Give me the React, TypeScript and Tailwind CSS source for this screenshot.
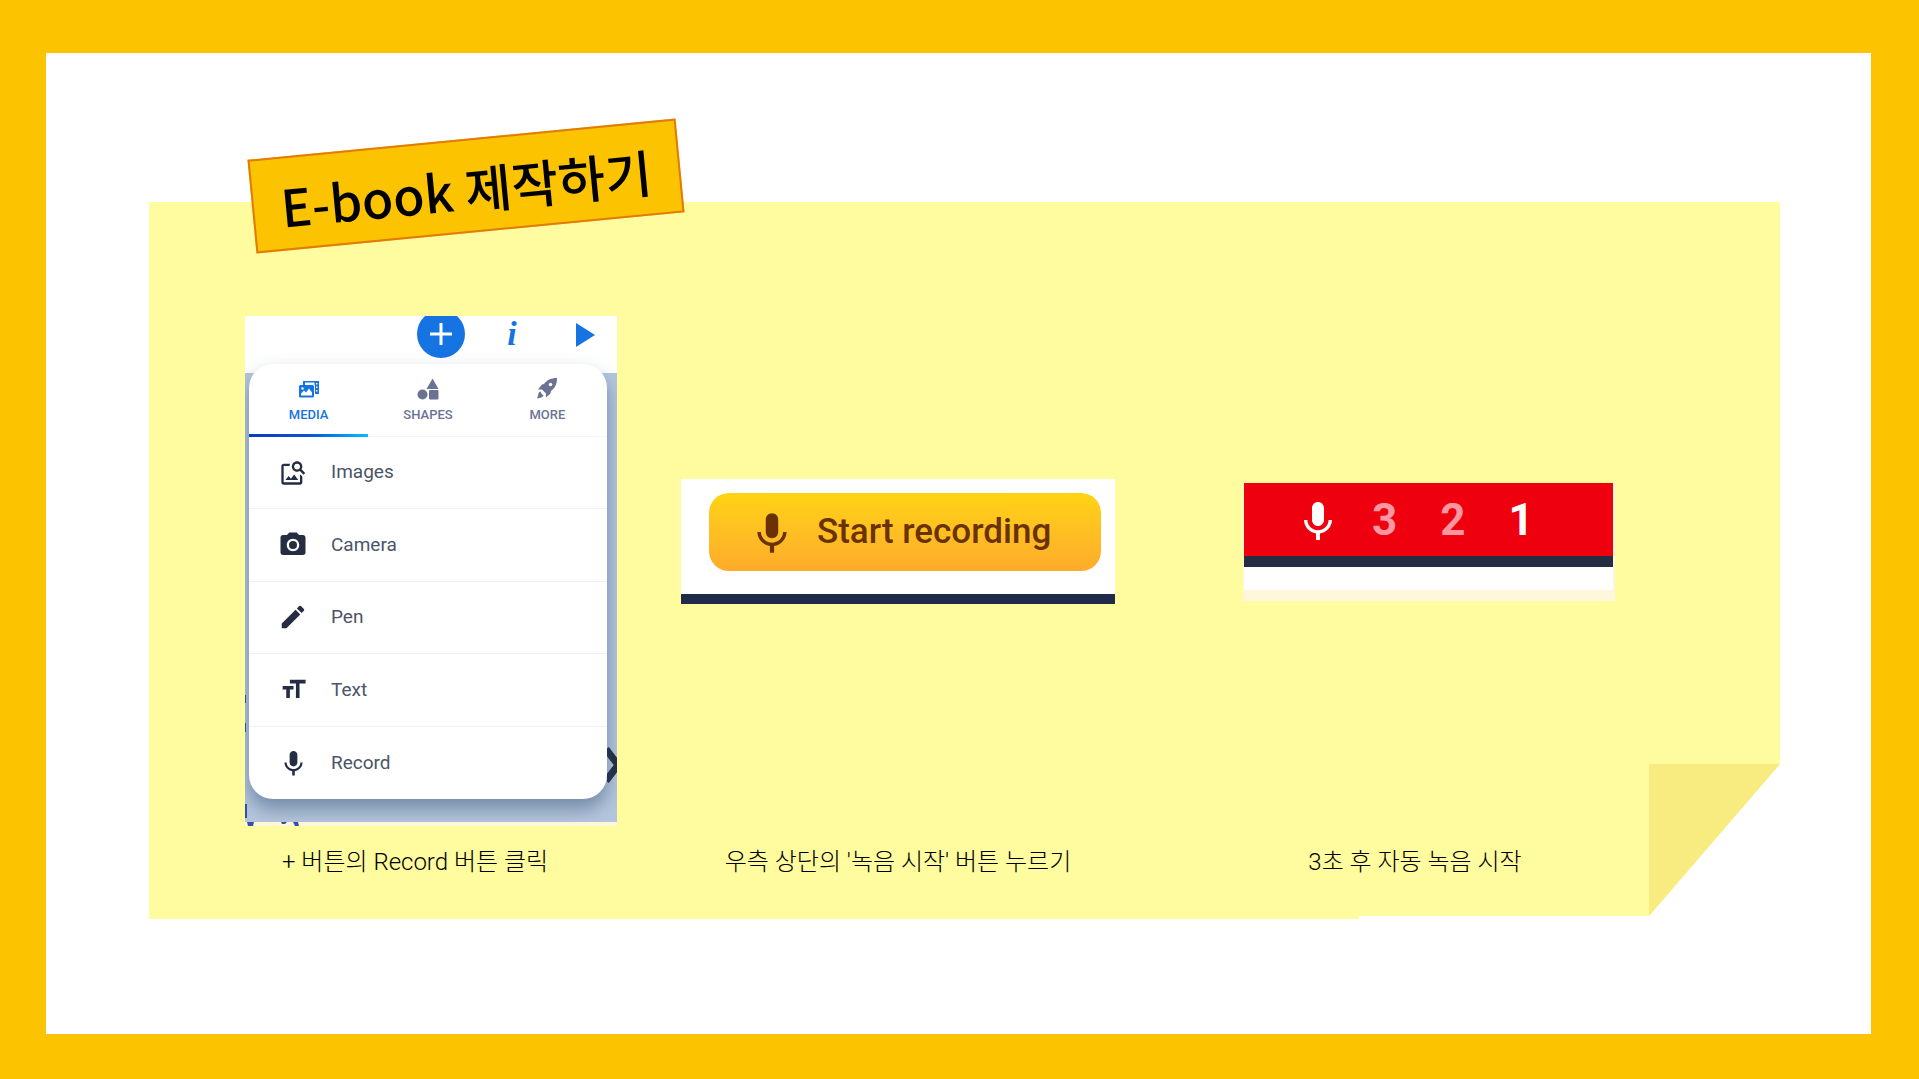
import type { ReactNode } from "react";
import type { IconType } from "react-icons";
import {
  MdCameraAlt,
  MdEdit,
  MdFormatSize,
  MdImageSearch,
  MdKeyboardVoice,
} from "react-icons/md";

const MediaIcon = () => (
  <svg viewBox="0 0 22 18" className="h-[18px] w-[22px]" fill="none">
    <path d="M5 1h16v13h-4V5H5z" fill="currentColor" />
    <path
      d="M7 2.500h9.500V5H7zM18 3h1.500v1.500H18zM18 6.500h1.500v1.500H18zM18 10h1.500v1.500H18z"
      fill="white"
    />
    <rect x="1" y="5" width="15" height="12.500" rx="1.500" fill="currentColor" />
    <path d="M3 15.500v-2l3-3 2 2 3-4 3 4v3z" fill="white" />
    <circle cx="4.500" cy="8.500" r="1.200" fill="white" />
  </svg>
);

const ShapesIcon = () => (
  <svg viewBox="0 0 22 22" className="h-[22px] w-[22px]" fill="currentColor">
    <path d="M15.500 0.500 21.500 11h-12z" />
    <circle cx="5.500" cy="16.500" r="5" />
    <rect x="12" y="12" width="9.500" height="9.500" rx="1" />
  </svg>
);

const RocketIcon = () => (
  <svg viewBox="0 0 20 21" className="h-[21px] w-5" fill="currentColor">
    <path d="M20 0C14 0 10 2 7 6L5 6.500 1 11.500 5 11.500 9 15.500 9 19.500 13.500 15.500 14 13C18 10 20 6 20 0z" />
    <path d="M3.500 13.500C1 14 1.500 17 0 20.500 3.500 20 6 19.500 6.500 17L5 16.500z" />
    <circle cx="13.500" cy="6.500" r="1.800" fill="white" />
  </svg>
);

const tabs: { label: string; icon: ReactNode; active?: boolean }[] = [
  { label: "MEDIA", icon: <MediaIcon />, active: true },
  { label: "SHAPES", icon: <ShapesIcon /> },
  { label: "MORE", icon: <RocketIcon /> },
];

const items: { label: string; Icon: IconType; size: number }[] = [
  { label: "Images", Icon: MdImageSearch, size: 28 },
  { label: "Camera", Icon: MdCameraAlt, size: 30 },
  { label: "Pen", Icon: MdEdit, size: 30 },
  { label: "Text", Icon: MdFormatSize, size: 29 },
  { label: "Record", Icon: MdKeyboardVoice, size: 31 },
];

const Toolbar = () => (
  <div className="flex h-[57px] items-start justify-end bg-white pr-[22px] text-[#1673e2]">
    <button
      aria-label="Add"
      className="-mt-[6px] flex h-12 w-12 items-center justify-center rounded-full bg-[#1673e2] text-white"
    >
      <svg viewBox="0 0 24 24" className="h-6 w-6" stroke="currentColor" strokeWidth="3">
        <path d="M12 1v22M1 12h22" />
      </svg>
    </button>
    <button
      aria-label="Info"
      className="ml-[37px] w-5 font-['Liberation_Serif',serif] text-[34px] leading-9 font-bold italic"
    >
      i
    </button>
    <button aria-label="Play" className="mt-[7px] ml-[54px]">
      <svg viewBox="0 0 19 24" className="h-6 w-[19px]" fill="currentColor">
        <path d="M0 0 19 12 0 24z" />
      </svg>
    </button>
  </div>
);

const AddMenu = () => (
  <div className="relative z-10 mr-[10px] -mt-[9px] ml-1 overflow-hidden rounded-3xl bg-white shadow-[0_10px_18px_rgba(50,80,115,0.5)]">
    <div className="grid h-[73px] grid-cols-3 border-b border-[#f4f5f7]">
      {tabs.map(({ label, icon, active }) => (
        <button
          key={label}
          className={
            active
              ? "relative flex flex-col items-center text-[#1673e2]"
              : "relative flex flex-col items-center text-[#6b7394]"
          }
        >
          <span className="mt-[13px] flex h-[23px] items-center">{icon}</span>
          <span className="mt-1 text-[13px] leading-[22px] font-medium">{label}</span>
          {active && (
            <span className="absolute inset-x-0 -bottom-px h-[3px] bg-linear-to-r from-[#0a3cc0] via-[#0f50d6] to-[#00bfff]" />
          )}
        </button>
      ))}
    </div>
    <ul className="grid h-[362px] grid-rows-5 divide-y divide-[#f0f1f3]">
      {items.map(({ label, Icon, size }) => (
        <li key={label}>
          <button className="flex h-full w-full items-center pl-[28px] text-[19px] text-[#4b5468]">
            <span className="flex w-[54px] text-[#242d42]">
              <span className="flex w-8 justify-center">
                <Icon size={size} />
              </span>
            </span>
            {label}
          </button>
        </li>
      ))}
    </ul>
  </div>
);

const MenuShot = () => (
  <div className="relative overflow-hidden bg-[#fdf7dc] pb-1">
    <div className="relative overflow-hidden bg-[#b5c6dc] pb-[23px]">
      <Toolbar />
      <AddMenu />
      <svg
        viewBox="0 0 10 38"
        className="absolute right-0 bottom-[38px] h-[38px] w-[10px]"
        fill="none"
        stroke="#242d42"
        strokeWidth="7"
      >
        <path d="M-1 3 11 19-1 35" />
      </svg>
    </div>
    <svg
      viewBox="0 0 60 132"
      className="absolute bottom-0 left-0 h-[132px] w-[60px]"
      fill="#3550a5"
    >
      <path d="M0 1h1v8H0zM0 29h1v9H0zM0 110h2v14H0zM2 128h7l-1 4H3zM36 128h6l-2 2h-3zM48 128h5l1 4h-4z" />
    </svg>
  </div>
);

const RecordShot = () => (
  <div className="mt-[163px] bg-white">
    <div className="pt-[14px] pr-[14px] pb-[23px] pl-7">
      <button className="flex h-[78px] w-full items-center gap-5 rounded-[20px] bg-linear-to-b from-[#ffd314] to-[#ffab2b] pl-[38px] text-[35px] font-medium whitespace-nowrap text-[#6a3200]">
        <MdKeyboardVoice size={50} />
        Start recording
      </button>
    </div>
    <div className="h-[10px] bg-[#1f2c49]" />
  </div>
);

const CountdownShot = () => (
  <div className="mt-[167px] bg-[#fef7dc] pr-[2px] pb-[11px] pl-px">
    <div className="flex h-[73px] items-center bg-[#ef000f] pl-[50px] font-bold text-white">
      <MdKeyboardVoice size={48} />
      <div className="ml-[30px] flex gap-[43px] text-[44px] leading-none">
        <span className="text-[#f997a0]">3</span>
        <span className="text-[#f997a0]">2</span>
        <span>1</span>
      </div>
    </div>
    <div className="h-[11px] bg-[#242d42]" />
    <div className="h-[23px] bg-white" />
  </div>
);

const Step = (props: { caption: string; className: string; children: ReactNode }) => (
  <figure className={`flex flex-col justify-between gap-[18px] ${props.className}`}>
    {props.children}
    {props.caption && (
      <figcaption className="text-center text-2xl leading-9 font-light text-black">
        {props.caption}
      </figcaption>
    )}
  </figure>
);

const App = () => {
  return (
    <main className="flex min-h-screen flex-col border-t-[53px] border-r-[48px] border-b-[45px] border-l-[46px] border-[#fcc400] bg-white font-['Roboto','Noto_Sans_CJK_KR',sans-serif]">
      <section className="relative mt-[149px] mr-[91px] mb-[115px] ml-[103px] flex-1">
        {/* paper with the folded corner cut away */}
        <div className="absolute inset-0 bg-[#fffb9f] [clip-path:polygon(0_0,100%_0,100%_calc(100%-155px),calc(100%-131px)_calc(100%-3px),74.2%_calc(100%-3px),74.2%_100%,0_100%)]" />
        <div className="absolute right-0 bottom-[3px] h-[152px] w-[131px] bg-[#f8eb80] [clip-path:polygon(0_0,100%_0,0_100%)]" />

        <h1 className="absolute -top-[63px] left-[102px] flex h-[94px] w-[430px] -rotate-[5.5deg] items-center justify-center border-2 border-[#e27a0c] bg-[#fcc400] pt-1 font-['Noto_Sans_CJK_KR',sans-serif] text-[51px] leading-none font-medium whitespace-nowrap text-black">
          E-book 제작하기
        </h1>

        <div className="relative grid grid-cols-[436fr_562fr_372fr] pt-[114px] pr-[165px] pl-24">
          <Step
            caption="+ 버튼의 Record 버튼 클릭"
            className="pr-16 [&>figcaption]:pr-8"
          >
            <MenuShot />
          </Step>
          <Step caption="우측 상단의 '녹음 시작' 버튼 누르기" className="pr-32">
            <RecordShot />
          </Step>
          <Step caption="3초 후 자동 녹음 시작" className="[&>figcaption]:pr-7">
            <CountdownShot />
          </Step>
        </div>
      </section>
    </main>
  );
};

export default App;
